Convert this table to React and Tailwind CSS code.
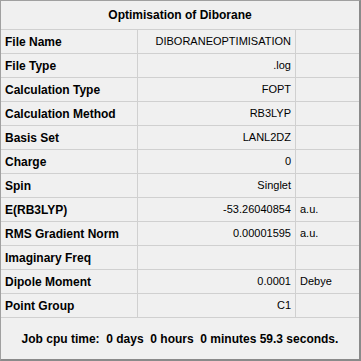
const rows = [
  ["File Name", "DIBORANEOPTIMISATION", ""],
  ["File Type", ".log", ""],
  ["Calculation Type", "FOPT", ""],
  ["Calculation Method", "RB3LYP", ""],
  ["Basis Set", "LANL2DZ", ""],
  ["Charge", "0", ""],
  ["Spin", "Singlet", ""],
  ["E(RB3LYP)", "-53.26040854", "a.u."],
  ["RMS Gradient Norm", "0.00001595", "a.u."],
  ["Imaginary Freq", "", ""],
  ["Dipole Moment", "0.0001", "Debye"],
  ["Point Group", "C1", ""],
];

export default function App() {
  return (
    <div
      className="w-[361px] h-[361px] bg-[#f0f0f0] text-black flex flex-col border-l border-t border-[#a0a0a0] border-r-2 border-r-[#8a8a8a] border-b-2 border-b-[#8a8a8a] text-[12px]"
      style={{ fontFamily: '"Liberation Sans", Arial, sans-serif' }}
    >
      <div className="h-[29px] shrink-0 flex items-center justify-center font-bold border-b border-[#d0d0d0]">
        Optimisation of Diborane
      </div>
      {rows.map(([label, value, unit]) => (
        <div
          key={label}
          className="h-[24px] shrink-0 grid grid-cols-[137px_158px_1fr] border-b border-[#d0d0d0]"
        >
          <div className="flex items-center pl-[4px] font-bold border-r border-[#d0d0d0]">
            {label}
          </div>
          <div className="flex items-center justify-end pr-[4px] text-[11px] border-r border-[#d0d0d0]">
            {value}
          </div>
          <div className="flex items-center pl-[4px] text-[11px]">{unit}</div>
        </div>
      ))}
      <div className="flex-1 flex items-center justify-center font-bold">
        Job cpu time:&nbsp; 0 days&nbsp; 0 hours&nbsp; 0 minutes 59.3 seconds.
      </div>
    </div>
  );
}
